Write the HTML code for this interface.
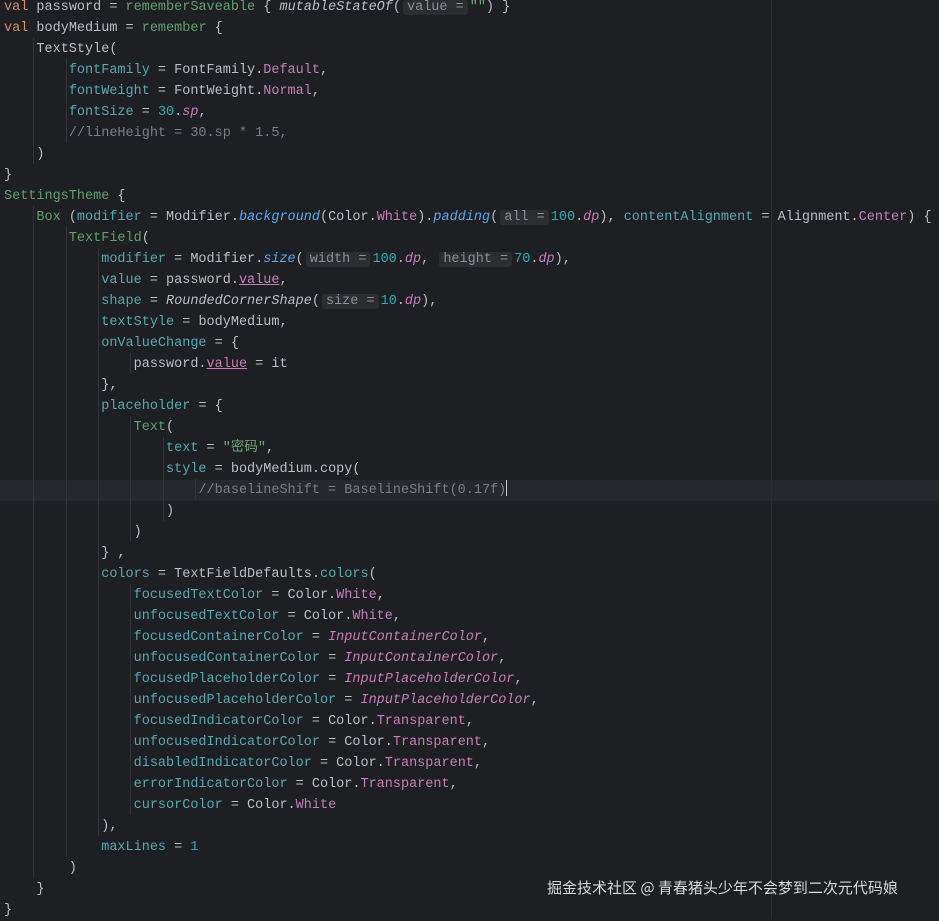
<!DOCTYPE html>
<html><head><meta charset="utf-8"><style>
html,body{margin:0;padding:0;background:#1e1f22;width:939px;height:919px;overflow:hidden}
pre{margin:0;position:absolute;left:4px;top:-3px;font-family:"Liberation Mono","Noto Sans CJK SC",monospace;font-size:13.5px;line-height:21px;color:#bcbec4}
.k{color:#cf8e6d}.f{color:#56a8b5}.g{color:#5fa06d}.p{color:#c77dbb}.n{color:#2aacb8}.c{color:#7a7e85}.s{color:#6aab73}
.i{font-style:italic}.fb{color:#56a8f5;font-style:italic}
.h{background:#2b2d30;color:#8c8f94;border-radius:3px;padding:0 4px;margin:0 2px}
.u{text-decoration:underline}
.cl{position:absolute;left:0;top:480px;width:939px;height:21px;background:#26282e}
.rm{position:absolute;left:771px;top:0;width:1px;height:919px;background:#2b2d30}
.wm{position:absolute;left:547px;top:877px;font-family:"Noto Sans CJK SC",sans-serif;font-size:15px;color:#d8d8d8}
.car{display:inline-block;width:1px;height:16px;background:#ced0d6;vertical-align:-3px}
.gd{position:absolute;width:1px;background:#313438}
</style></head><body>
<div class="cl"></div><div class="rm"></div>
<div class="gd" style="left:33px;top:38px;height:126px"></div>
<div class="gd" style="left:66px;top:59px;height:84px"></div>
<div class="gd" style="left:33px;top:206px;height:672px"></div>
<div class="gd" style="left:66px;top:227px;height:630px"></div>
<div class="gd" style="left:98px;top:248px;height:588px"></div>
<div class="gd" style="left:130px;top:353px;height:21px"></div>
<div class="gd" style="left:130px;top:416px;height:126px"></div>
<div class="gd" style="left:163px;top:437px;height:84px"></div>
<div class="gd" style="left:195px;top:479px;height:21px"></div>
<div class="gd" style="left:130px;top:584px;height:231px"></div>
<pre><span class="k">val</span> password = <span class="g">rememberSaveable</span> { <span class="i">mutableStateOf</span>(<span class="h">value =</span><span class="s">""</span>) }
<span class="k">val</span> bodyMedium = <span class="g">remember</span> {
    TextStyle(
        <span class="f">fontFamily</span> = FontFamily.<span class="p">Default</span>,
        <span class="f">fontWeight</span> = FontWeight.<span class="p">Normal</span>,
        <span class="f">fontSize</span> = <span class="n">30</span>.<span class="p i">sp</span>,
        <span class="c">//lineHeight = 30.sp * 1.5,</span>
    )
}
<span class="g">SettingsTheme</span> {
    <span class="g">Box</span> (<span class="f">modifier</span> = Modifier.<span class="fb">background</span>(Color.<span class="p">White</span>).<span class="fb">padding</span>(<span class="h">all =</span><span class="n">100</span>.<span class="p i">dp</span>), <span class="f">contentAlignment</span> = Alignment.<span class="p">Center</span>) {
        <span class="g">TextField</span>(
            <span class="f">modifier</span> = Modifier.<span class="fb">size</span>(<span class="h">width =</span><span class="n">100</span>.<span class="p i">dp</span>, <span class="h">height =</span><span class="n">70</span>.<span class="p i">dp</span>),
            <span class="f">value</span> = password.<span class="p u">value</span>,
            <span class="f">shape</span> = <span class="i">RoundedCornerShape</span>(<span class="h">size =</span><span class="n">10</span>.<span class="p i">dp</span>),
            <span class="f">textStyle</span> = bodyMedium,
            <span class="f">onValueChange</span> = {
                password.<span class="p u">value</span> = it
            },
            <span class="f">placeholder</span> = {
                <span class="g">Text</span>(
                    <span class="f">text</span> = <span class="s">"密码"</span>,
                    <span class="f">style</span> = bodyMedium.copy(
                        <span class="c">//baselineShift = BaselineShift(0.17f)</span><span class="car"></span>
                    )
                )
            } ,
            <span class="f">colors</span> = TextFieldDefaults.<span class="f">colors</span>(
                <span class="f">focusedTextColor</span> = Color.<span class="p">White</span>,
                <span class="f">unfocusedTextColor</span> = Color.<span class="p">White</span>,
                <span class="f">focusedContainerColor</span> = <span class="p i">InputContainerColor</span>,
                <span class="f">unfocusedContainerColor</span> = <span class="p i">InputContainerColor</span>,
                <span class="f">focusedPlaceholderColor</span> = <span class="p i">InputPlaceholderColor</span>,
                <span class="f">unfocusedPlaceholderColor</span> = <span class="p i">InputPlaceholderColor</span>,
                <span class="f">focusedIndicatorColor</span> = Color.<span class="p">Transparent</span>,
                <span class="f">unfocusedIndicatorColor</span> = Color.<span class="p">Transparent</span>,
                <span class="f">disabledIndicatorColor</span> = Color.<span class="p">Transparent</span>,
                <span class="f">errorIndicatorColor</span> = Color.<span class="p">Transparent</span>,
                <span class="f">cursorColor</span> = Color.<span class="p">White</span>
            ),
            <span class="f">maxLines</span> = <span class="n">1</span>
        )
    }
}</pre>
<div class="wm">掘金技术社区 @ 青春猪头少年不会梦到二次元代码娘</div>
</body></html>
